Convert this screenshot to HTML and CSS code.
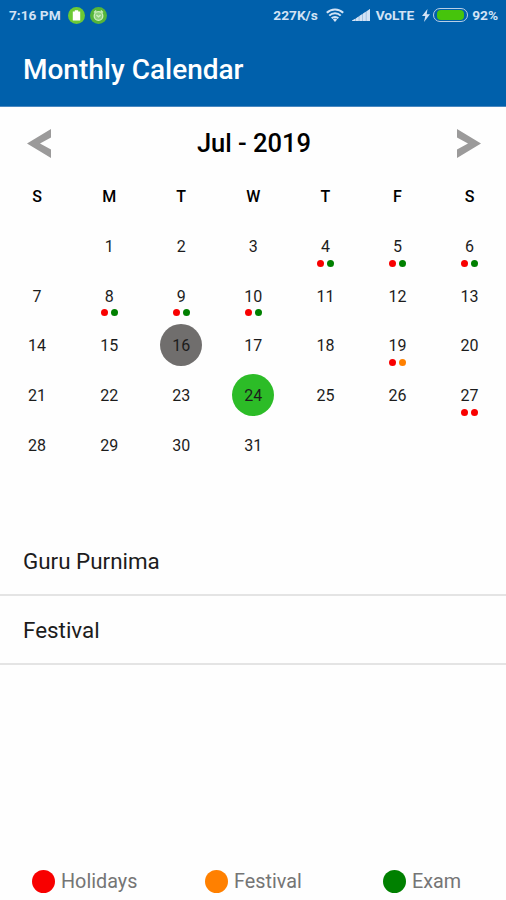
FILE: index.html
```html
<!DOCTYPE html>
<html lang="en">
  <head>
    <meta charset="UTF-8" />
    <meta name="viewport" content="width=device-width, initial-scale=1.0" />
    <title>Monthly Calendar</title>

    <link rel="stylesheet" href="styles.css">
  </head>

  <body>
    <header class="header">
      <div class="status-bar">
        <span class="time">7:16 PM</span>
        <svg class="app-icon" viewBox="0 0 17 17">
          <circle cx="8.5" cy="8.5" r="8.5" fill="#6cc935" />
          <path d="M4.8 4.5h2V3.2h3.4v1.3h2v9H4.8z" fill="#fff" />
        </svg>
        <svg class="app-icon alarm" viewBox="0 0 17 17">
          <circle cx="8.5" cy="8.5" r="8.5" fill="#55b53a" />
          <circle cx="8.5" cy="9" r="4.3" fill="#8fd07c" />
          <g fill="none" stroke="#cdeec0" stroke-width="1.3">
            <circle cx="8.5" cy="9" r="4.3" />
            <path d="M4 5.6l2.2-2M13 5.6l-2.2-2M6.4 8l2.1 1.8L10.6 8" />
          </g>
        </svg>

        <span class="speed">227K/s</span>
        <svg class="wifi" viewBox="0 0 18 14">
          <g fill="none" stroke="#d3e3f5" stroke-width="2">
            <path d="M.8 4.8a11.8 11.8 0 0 1 16.4 0" />
            <path d="M3.3 7.6a8 8 0 0 1 11.4 0" />
            <path d="M5.7 10.3a4.6 4.6 0 0 1 6.6 0" />
          </g>
          <path d="M6.9 11.6a3 3 0 0 1 4.2 0L9 14z" fill="#d3e3f5" />
        </svg>
        <svg class="signal" viewBox="0 0 18 12">
          <path d="M0 12L18 0v12z" fill="#8fb4da" />
          <path d="M0 12v-.4L3.2 9.8V12zM3.9 12V9.4l2.8-1.8V12zM7.4 12V7.1l2.8-1.9V12zM10.9 12V4.7l2.9-1.9V12zM14.5 12V2.4L18 0v12z" fill="#d3e3f5" />
        </svg>
        <span class="network">VoLTE</span>
        <svg class="bolt" viewBox="0 0 8 13">
          <path d="M5.5 0L0 7h3.3L2 13l6-7.7H4.7z" fill="#d3e3f5" />
        </svg>
        <div class="battery"><div class="battery-level"></div></div>
        <span class="percent">92%</span>
      </div>
      <h1>Monthly Calendar</h1>
    </header>

    <div class="month">
      <svg class="arrow" viewBox="0 0 24 29">
        <path d="M24 0v8.5L13 14.5l11 6V29L0 14.5z" />
      </svg>
      <h2>Jul - 2019</h2>
      <svg class="arrow" viewBox="0 0 24 29">
        <path d="M0 0v8.5l11 6-11 6V29l24-14.5z" />
      </svg>
    </div>

    <div class="weekdays">
      <div>S</div>
      <div>M</div>
      <div>T</div>
      <div>W</div>
      <div>T</div>
      <div>F</div>
      <div>S</div>
    </div>

    <div class="days">
      <div class="day"></div>
      <div class="day">1</div>
      <div class="day">2</div>
      <div class="day">3</div>
      <div class="day">4<div class="dots"><i class="holiday"></i><i class="exam"></i></div></div>
      <div class="day">5<div class="dots"><i class="holiday"></i><i class="exam"></i></div></div>
      <div class="day">6<div class="dots"><i class="holiday"></i><i class="exam"></i></div></div>

      <div class="day">7</div>
      <div class="day">8<div class="dots"><i class="holiday"></i><i class="exam"></i></div></div>
      <div class="day">9<div class="dots"><i class="holiday"></i><i class="exam"></i></div></div>
      <div class="day">10<div class="dots"><i class="holiday"></i><i class="exam"></i></div></div>
      <div class="day">11</div>
      <div class="day">12</div>
      <div class="day">13</div>

      <div class="day">14</div>
      <div class="day">15</div>
      <div class="day"><span class="circle selected">16</span></div>
      <div class="day">17</div>
      <div class="day">18</div>
      <div class="day">19<div class="dots"><i class="holiday"></i><i class="festival"></i></div></div>
      <div class="day">20</div>

      <div class="day">21</div>
      <div class="day">22</div>
      <div class="day">23</div>
      <div class="day"><span class="circle today">24</span></div>
      <div class="day">25</div>
      <div class="day">26</div>
      <div class="day">27<div class="dots"><i class="holiday"></i><i class="holiday"></i></div></div>

      <div class="day">28</div>
      <div class="day">29</div>
      <div class="day">30</div>
      <div class="day">31</div>
    </div>

    <div class="events">
      <div class="event">Guru Purnima</div>
      <div class="event">Festival</div>
    </div>

    <footer class="legend">
      <div class="legend-item"><i class="holiday"></i>Holidays</div>
      <div class="legend-item"><i class="festival"></i>Festival</div>
      <div class="legend-item"><i class="exam"></i>Exam</div>
    </footer>
  </body>
</html>
```

FILE: styles.css
```css
* {
  box-sizing: border-box;
}

body {
  margin: 0;
  height: 900px;
  display: flex;
  flex-direction: column;
  background-color: #fefefe;
  color: #1c1c1c;
  font-family: Roboto, sans-serif;
}

svg {
  display: block;
  flex: none;
}

.header {
  height: 107px;
  background-color: #0060ab;
  border-bottom: 1px solid #4a88c0;
  color: white;
}

.status-bar {
  display: flex;
  align-items: center;
  height: 30px;
  padding: 0 8px 0 9px;
  color: #d3e3f5;
  font-size: 13.7px;
  font-weight: 700;
  white-space: nowrap;
}

.time {
  width: 59px;
}

.app-icon {
  width: 17px;
  height: 17px;
}

.alarm {
  margin-left: 5px;
}

.speed {
  margin-left: auto;
}

.wifi {
  width: 18px;
  height: 14px;
  margin-left: 8px;
}

.signal {
  width: 18px;
  height: 12px;
  margin-left: 8px;
}

.network {
  margin-left: 6px;
}

.bolt {
  width: 8px;
  height: 13px;
  margin-left: 8px;
}

.battery {
  width: 35px;
  height: 14px;
  margin: 0 4px 0 3px;
  padding: 1px 3px;
  border: 1px solid #b9cfe6;
  border-radius: 7px;
}

.battery-level {
  height: 100%;
  border-radius: 4px;
  background-color: #46c40c;
}

h1 {
  margin: 23px 0 0 23px;
  font-size: 28px;
  font-weight: 500;
  line-height: 34px;
}

.month {
  display: flex;
  justify-content: space-between;
  align-items: center;
  height: 72px;
  padding: 0 25px 0 27px;
}

.month h2 {
  margin: 0;
  color: #000;
  font-size: 25.5px;
  font-weight: 500;
}

.arrow {
  width: 24px;
  height: 29px;
  fill: #9b9a9a;
}

.weekdays,
.days {
  display: grid;
  grid-template-columns: repeat(7, 72.1px);
  padding-left: 1px;
  text-align: center;
}

.weekdays {
  height: 42px;
  padding-top: 8px;
  color: #000;
  font-size: 16px;
  font-weight: 500;
  line-height: 20px;
}

.days {
  grid-auto-rows: 49.7px;
  height: 307px;
}

.day {
  position: relative;
  display: flex;
  align-items: center;
  justify-content: center;
  padding-top: 1px;
  font-size: 16px;
}

.circle {
  display: flex;
  align-items: center;
  justify-content: center;
  width: 42px;
  height: 42px;
  margin-top: -1px;
  padding-top: 1px;
  border-radius: 50%;
}

.selected {
  background-color: #706e6d;
}

.today {
  background-color: #2cbc27;
}

.dots {
  position: absolute;
  left: 0;
  right: 0;
  bottom: 4px;
  display: flex;
  justify-content: center;
  gap: 3px;
}

.dots i {
  width: 7px;
  height: 7px;
  border-radius: 50%;
}

.holiday {
  background-color: #f80000;
}

.festival {
  background-color: #ff8000;
}

.exam {
  background-color: #008000;
}

.event {
  height: 69px;
  padding-left: 23px;
  border-bottom: 2px solid #e4e4e4;
  font-size: 22.4px;
  line-height: 69px;
}

.event:first-child {
  height: 68px;
  line-height: 67px;
}

.legend {
  display: flex;
  height: 38px;
  margin-top: auto;
  padding-left: 32px;
  color: #757575;
  font-size: 19.8px;
}

.legend-item {
  display: flex;
  flex: none;
  align-items: center;
}

.legend-item:nth-child(1) {
  width: 173px;
}

.legend-item:nth-child(2) {
  width: 178px;
}

.legend-item i {
  width: 23px;
  height: 23px;
  margin-right: 6px;
  border-radius: 50%;
}
```
